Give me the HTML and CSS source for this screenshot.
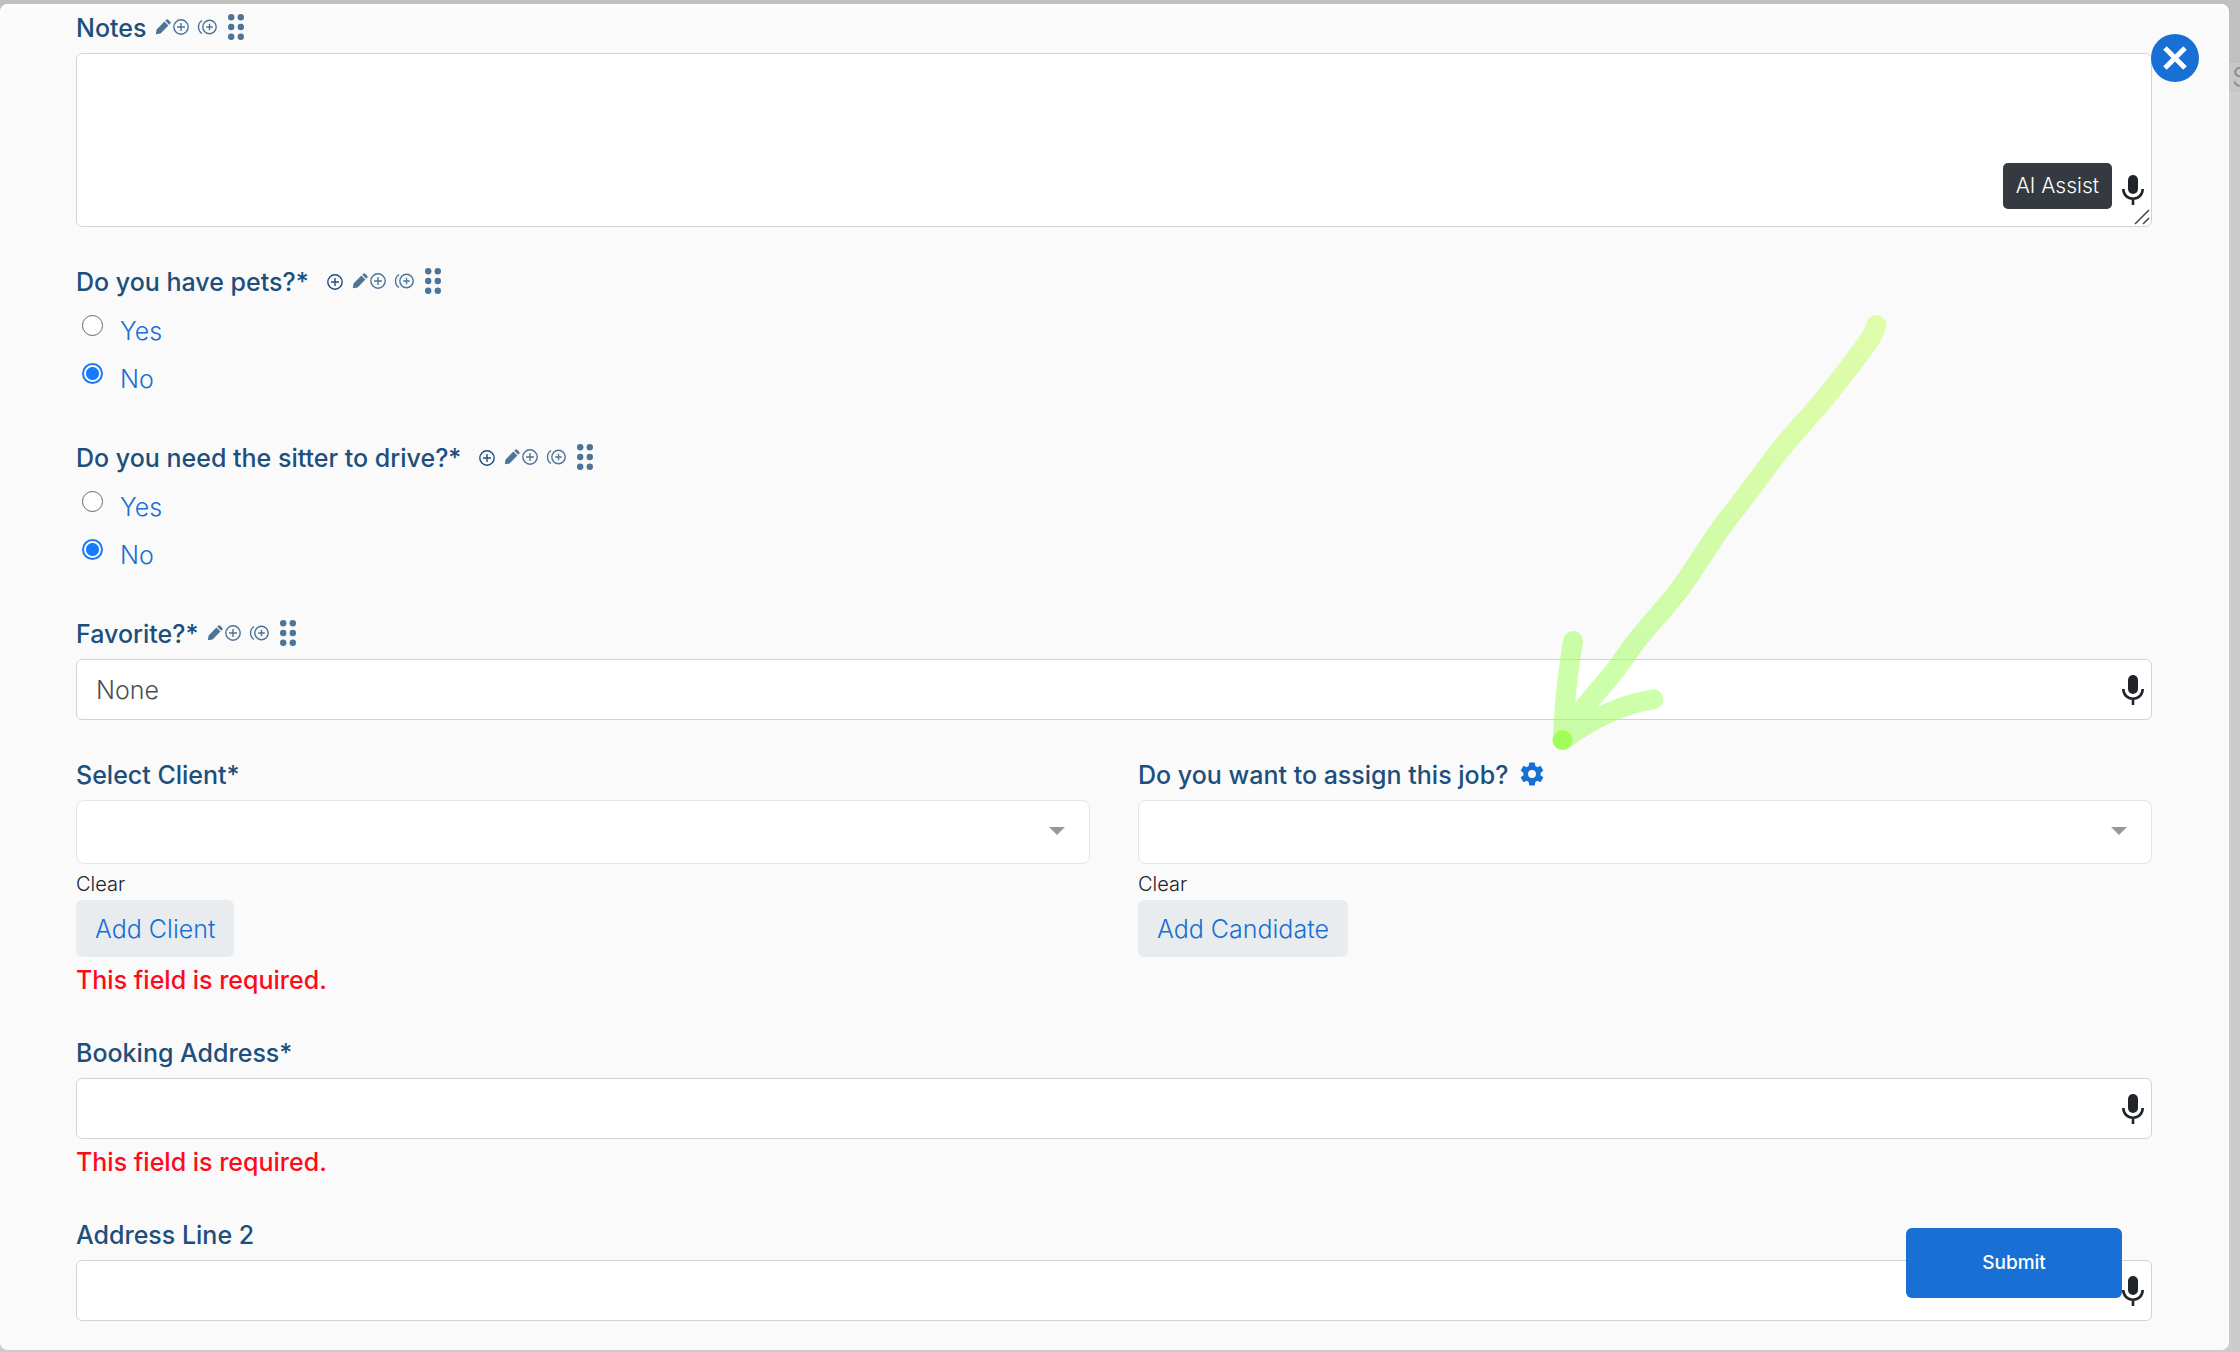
FILE: index.html
```
<!DOCTYPE html>
<html lang="en">
<head>
<meta charset="utf-8">
<meta name="viewport" content="width=device-width, initial-scale=1">
<title>Job form</title>
<link rel="stylesheet" href="styles.css">
</head>
<body>
<svg class="sprite" aria-hidden="true">
  <symbol id="pencil" viewBox="0 0 16 16"><path d="M.8 15.200l.8-4.800L9.400 2.600l4 4L5.600 14.400zM10.300 1.700l.9-.9a1.400 1.400 0 0 1 2 0l2 2a1.400 1.400 0 0 1 0 2l-.9.9z" fill="currentColor"/></symbol>
  <symbol id="plus" viewBox="0 0 16 16"><g fill="none" stroke="currentColor" stroke-width="1.400"><circle cx="8" cy="8" r="7.200"/><path d="M8 4v8M4 8h8"/></g></symbol>
  <symbol id="plus-double" viewBox="0 0 20 16"><g fill="none" stroke="currentColor" stroke-width="1.400"><circle cx="12.500" cy="8" r="6.700"/><path d="M12.500 4.700v6.600M9.200 8h6.600M5 1.500a7.800 7.800 0 0 0 0 13"/></g></symbol>
  <symbol id="grip" viewBox="0 0 16 26"><g fill="currentColor"><circle cx="3.200" cy="3.300" r="3.200"/><circle cx="12.800" cy="3.300" r="3.200"/><circle cx="3.200" cy="13" r="3.200"/><circle cx="12.800" cy="13" r="3.200"/><circle cx="3.200" cy="22.700" r="3.200"/><circle cx="12.800" cy="22.700" r="3.200"/></g></symbol>
  <symbol id="mic" viewBox="0 0 22 30"><rect x="6" y="0" width="10" height="19" rx="5" fill="currentColor"/><path d="M1.300 14c0 5.800 4.200 9.700 9.700 9.700s9.700-3.900 9.700-9.700M11 23.500V30" fill="none" stroke="currentColor" stroke-width="2.600"/></symbol>
  <symbol id="gear" viewBox="2 2 20 20"><path d="M19.140 12.940c.04-.3.060-.61.060-.94s-.02-.64-.07-.94l2.030-1.580a.49.49 0 0 0 .12-.61l-1.920-3.320a.49.49 0 0 0-.59-.22l-2.390.96a7 7 0 0 0-1.620-.94l-.36-2.540a.48.48 0 0 0-.48-.41h-3.840a.47.47 0 0 0-.47.41l-.36 2.540c-.59.24-1.130.57-1.620.94l-2.390-.96a.48.48 0 0 0-.59.22L2.740 8.870a.47.47 0 0 0 .12.61l2.030 1.580c-.05.3-.09.63-.09.94s.02.64.07.94l-2.030 1.580a.49.49 0 0 0-.12.61l1.920 3.320c.12.22.37.29.59.22l2.390-.96c.5.38 1.030.7 1.620.94l.36 2.540c.05.24.24.41.48.41h3.840c.24 0 .44-.17.47-.41l.36-2.540a7 7 0 0 0 1.620-.94l2.390.96c.22.08.47 0 .59-.22l1.920-3.320a.47.47 0 0 0-.12-.61zM12 15.300a3.300 3.300 0 1 1 0-6.600 3.300 3.300 0 0 1 0 6.600z" fill="currentColor"/></symbol>
</svg>

<div class="backdrop" aria-hidden="true"><span class="backdrop-text">S</span></div>

<main class="modal">
  <form class="form">
    <div class="group">
      <div class="label-row">
        <label for="notes">Notes</label>
        <span class="tools">
          <button type="button" aria-label="Edit"><svg class="i-pencil"><use href="#pencil"/></svg></button>
          <button type="button" aria-label="Add"><svg class="i-plus"><use href="#plus"/></svg></button>
          <button type="button" aria-label="Duplicate"><svg class="i-double"><use href="#plus-double"/></svg></button>
          <button type="button" aria-label="Move"><svg class="i-grip"><use href="#grip"/></svg></button>
        </span>
      </div>
      <div class="control">
        <textarea id="notes" class="input area"></textarea>
        <div class="area-tools">
          <button type="button" class="assist">AI Assist</button>
          <button type="button" class="mic" aria-label="Dictate"><svg><use href="#mic"/></svg></button>
        </div>
        <svg class="resize" viewBox="0 0 16 16" aria-hidden="true"><path d="M1 15L15 1M9 15l6-6" stroke="#444" stroke-width="1.500"/></svg>
      </div>
    </div>

    <fieldset class="group">
      <legend class="label-row">
        <span>Do you have pets?*</span>
        <button type="button" class="add-option" aria-label="Add option"><svg class="i-plus"><use href="#plus"/></svg></button>
        <span class="tools">
          <button type="button" aria-label="Edit"><svg class="i-pencil"><use href="#pencil"/></svg></button>
          <button type="button" aria-label="Add"><svg class="i-plus"><use href="#plus"/></svg></button>
          <button type="button" aria-label="Duplicate"><svg class="i-double"><use href="#plus-double"/></svg></button>
          <button type="button" aria-label="Move"><svg class="i-grip"><use href="#grip"/></svg></button>
        </span>
      </legend>
      <div class="option"><input type="radio" id="pets-yes" name="pets"><label for="pets-yes">Yes</label></div>
      <div class="option"><input type="radio" id="pets-no" name="pets" checked><label for="pets-no">No</label></div>
    </fieldset>

    <fieldset class="group">
      <legend class="label-row">
        <span>Do you need the sitter to drive?*</span>
        <button type="button" class="add-option" aria-label="Add option"><svg class="i-plus"><use href="#plus"/></svg></button>
        <span class="tools">
          <button type="button" aria-label="Edit"><svg class="i-pencil"><use href="#pencil"/></svg></button>
          <button type="button" aria-label="Add"><svg class="i-plus"><use href="#plus"/></svg></button>
          <button type="button" aria-label="Duplicate"><svg class="i-double"><use href="#plus-double"/></svg></button>
          <button type="button" aria-label="Move"><svg class="i-grip"><use href="#grip"/></svg></button>
        </span>
      </legend>
      <div class="option"><input type="radio" id="drive-yes" name="drive"><label for="drive-yes">Yes</label></div>
      <div class="option"><input type="radio" id="drive-no" name="drive" checked><label for="drive-no">No</label></div>
    </fieldset>

    <div class="group">
      <div class="label-row">
        <label for="favorite">Favorite?*</label>
        <span class="tools">
          <button type="button" aria-label="Edit"><svg class="i-pencil"><use href="#pencil"/></svg></button>
          <button type="button" aria-label="Add"><svg class="i-plus"><use href="#plus"/></svg></button>
          <button type="button" aria-label="Duplicate"><svg class="i-double"><use href="#plus-double"/></svg></button>
          <button type="button" aria-label="Move"><svg class="i-grip"><use href="#grip"/></svg></button>
        </span>
      </div>
      <div class="control">
        <input id="favorite" class="input" type="text" value="None">
        <button type="button" class="mic" aria-label="Dictate"><svg><use href="#mic"/></svg></button>
      </div>
    </div>

    <div class="columns">
      <div class="group">
        <div class="label-row"><label for="client">Select Client*</label></div>
        <div class="control">
          <select id="client" class="select"><option></option></select>
          <svg class="caret" viewBox="0 0 16 8" aria-hidden="true"><path d="M0 0h16L8 8z" fill="#999"/></svg>
        </div>
        <button type="button" class="clear">Clear</button>
        <button type="button" class="add">Add Client</button>
        <p class="error">This field is required.</p>
      </div>
      <div class="group">
        <div class="label-row">
          <label for="assign">Do you want to assign this job?</label>
          <button type="button" class="gear" aria-label="Assignment settings"><svg><use href="#gear"/></svg></button>
        </div>
        <div class="control">
          <select id="assign" class="select"><option></option></select>
          <svg class="caret" viewBox="0 0 16 8" aria-hidden="true"><path d="M0 0h16L8 8z" fill="#999"/></svg>
        </div>
        <button type="button" class="clear">Clear</button>
        <button type="button" class="add">Add Candidate</button>
      </div>
    </div>

    <div class="group">
      <div class="label-row"><label for="address">Booking Address*</label></div>
      <div class="control">
        <input id="address" class="input" type="text">
        <button type="button" class="mic" aria-label="Dictate"><svg><use href="#mic"/></svg></button>
      </div>
      <p class="error">This field is required.</p>
    </div>

    <div class="group">
      <div class="label-row"><label for="address2">Address Line 2</label></div>
      <div class="control">
        <input id="address2" class="input" type="text">
        <button type="button" class="mic" aria-label="Dictate"><svg><use href="#mic"/></svg></button>
      </div>
    </div>

    <button type="submit" class="submit">Submit</button>
  </form>
  <button type="button" class="close" aria-label="Close"><svg viewBox="0 0 24 24"><path d="M2 2l20 20M22 2L2 22" stroke="currentColor" stroke-width="5"/></svg></button>
</main>

<svg class="arrow" viewBox="0 0 1320 1380" aria-hidden="true">
  <defs>
    <linearGradient id="ink" gradientUnits="userSpaceOnUse" x1="1189" y1="75" x2="350" y2="1170">
      <stop offset="0" stop-color="#c4ff58"/><stop offset="1" stop-color="#9cff58"/>
    </linearGradient>
  </defs>
  <g opacity=".5" fill="none" stroke="url(#ink)" stroke-width="60" stroke-linecap="round" stroke-linejoin="round">
    <path d="M1189 75C1184 97 1176 110 1160 132C1120 188 1080 238 1040 288C1000 338 940 400 900 450C850 515 800 585 750 648C690 724 650 800 595 873C555 925 500 982 460 1035C435 1070 415 1100 390 1130C345 1184 300 1230 247 1320"/>
    <path d="M279 1023C262 1130 250 1250 249 1320C330 1260 420 1213 520 1198"/>
    <path d="M258 1230L300 1235L290 1270"/>
  </g>
  <circle cx="248" cy="1320" r="30" fill="#9fff58"/>
</svg>
</body>
</html>
```
FILE: styles.css
```
* { box-sizing: border-box; }

body {
  margin: 0;
  padding: 4px 11px 0 0;
  position: relative;
  background: #ccc;
  color: #212529;
  font-family: Inter, "Open Sans", sans-serif;
  font-size: 25px;
  font-weight: 300;
  line-height: 36px;
}

.sprite { position: absolute; width: 0; height: 0; }

button, input, select, textarea { font: inherit; color: inherit; }

button {
  display: inline-flex;
  align-items: center;
  justify-content: center;
  margin: 0;
  padding: 0;
  border: 0;
  background: none;
  cursor: pointer;
}

.backdrop {
  position: absolute;
  inset: 0 0 auto 0;
  height: 92px;
  padding-top: 59px;
  overflow: hidden;
  background: linear-gradient(#c0c0c0 61px, #b8b8b8 61px 62px, #c6c6c6 62px);
  text-align: right;
}
.backdrop-text { margin-right: -8px; color: #888; }

.modal {
  position: relative;
  padding: 6px 77px 29px 76px;
  border-radius: 8px;
  background: #fafafa;
  box-shadow: inset 0 2px 4px #fff;
}

.form { display: flex; flex-direction: column; gap: 37px; }

.group { min-width: 0; margin: 0; padding: 0; border: 0; }

.columns { display: grid; grid-template-columns: 1fr 1fr; gap: 48px; }

.label-row {
  display: flex;
  align-items: center;
  height: 36px;
  margin-bottom: 7px;
  padding: 0;
  color: #1d4f7c;
  font-weight: 500;
  white-space: nowrap;
}

.tools {
  display: flex;
  align-items: center;
  padding-bottom: 2px;
  margin-left: 9px;
  color: #4d7497;
}
.tools svg, .add-option svg { display: block; }
.i-pencil { width: 16px; height: 16px; }
.i-plus { width: 16px; height: 16px; margin-left: 2px; }
.i-double { width: 20px; height: 16px; margin-left: 8px; }
.i-grip { width: 16px; height: 26px; margin-left: 11px; }
.add-option { margin-left: 16px; color: #1d4f7c; }

.gear { margin-left: 12px; padding-bottom: 3px; color: #186fd4; }
.gear svg { width: 24px; height: 24px; }

.control { position: relative; display: flex; }

.input {
  width: 100%;
  height: 61px;
  padding: 0 56px 0 19px;
  border: 1px solid #ced4da;
  border-radius: 6px;
  background: #fff;
  color: #495057;
}
.area { height: 174px; padding-top: 12px; resize: none; }

.mic { color: #212529; }
.mic svg { width: 22px; height: 30px; }
.control > .mic { position: absolute; top: 0; bottom: 0; right: 8px; }

.area-tools {
  position: absolute;
  right: 8px;
  bottom: 18px;
  display: flex;
  align-items: center;
  gap: 10px;
}
.area-tools .mic { padding-top: 8px; }
.assist {
  height: 46px;
  padding: 0 13px;
  border-radius: 5px;
  background: #343a40;
  color: #fff;
  font-size: 21px;
}
.resize { position: absolute; right: 2px; bottom: 2px; width: 16px; height: 16px; }

.option { display: flex; align-items: center; height: 48px; }
.option input {
  appearance: none;
  width: 21px;
  height: 21px;
  margin: 0 17px 12px 6px;
  border: 1px solid #666;
  border-radius: 50%;
  background: #fff;
}
.option input:checked {
  border: 2px solid #147aff;
  background: radial-gradient(circle, #147aff 6px, #fff 7px);
}
.option label { color: #186fd4; }

.select {
  appearance: none;
  width: 100%;
  height: 64px;
  padding: 0 56px 0 19px;
  border: 1px solid #e4e4e4;
  border-radius: 8px;
  background: #fff;
}
.caret { position: absolute; top: 27px; right: 25px; width: 16px; height: 8px; pointer-events: none; }

.clear { display: flex; margin-top: 4px; height: 32px; font-size: 20px; }
.add {
  display: flex;
  height: 57px;
  padding: 0 19px;
  border-radius: 6px;
  background: #e9ecef;
  color: #186fd4;
}

.error { margin: 5px 0 0; color: #ff0a1b; font-weight: 500; }

.close {
  position: absolute;
  top: 30px;
  right: 30px;
  width: 48px;
  height: 48px;
  border-radius: 50%;
  background: #186fd4;
  color: #fff;
}
.close svg { width: 24px; height: 24px; }

.submit {
  position: fixed;
  right: 118px;
  bottom: 54px;
  width: 216px;
  height: 70px;
  border-radius: 6px;
  background: #186fd4;
  color: #fff;
  font-size: 19px;
  font-weight: 500;
}

.arrow {
  position: absolute;
  top: 300px;
  right: 320px;
  width: 440px;
  height: 460px;
  pointer-events: none;
}
```
